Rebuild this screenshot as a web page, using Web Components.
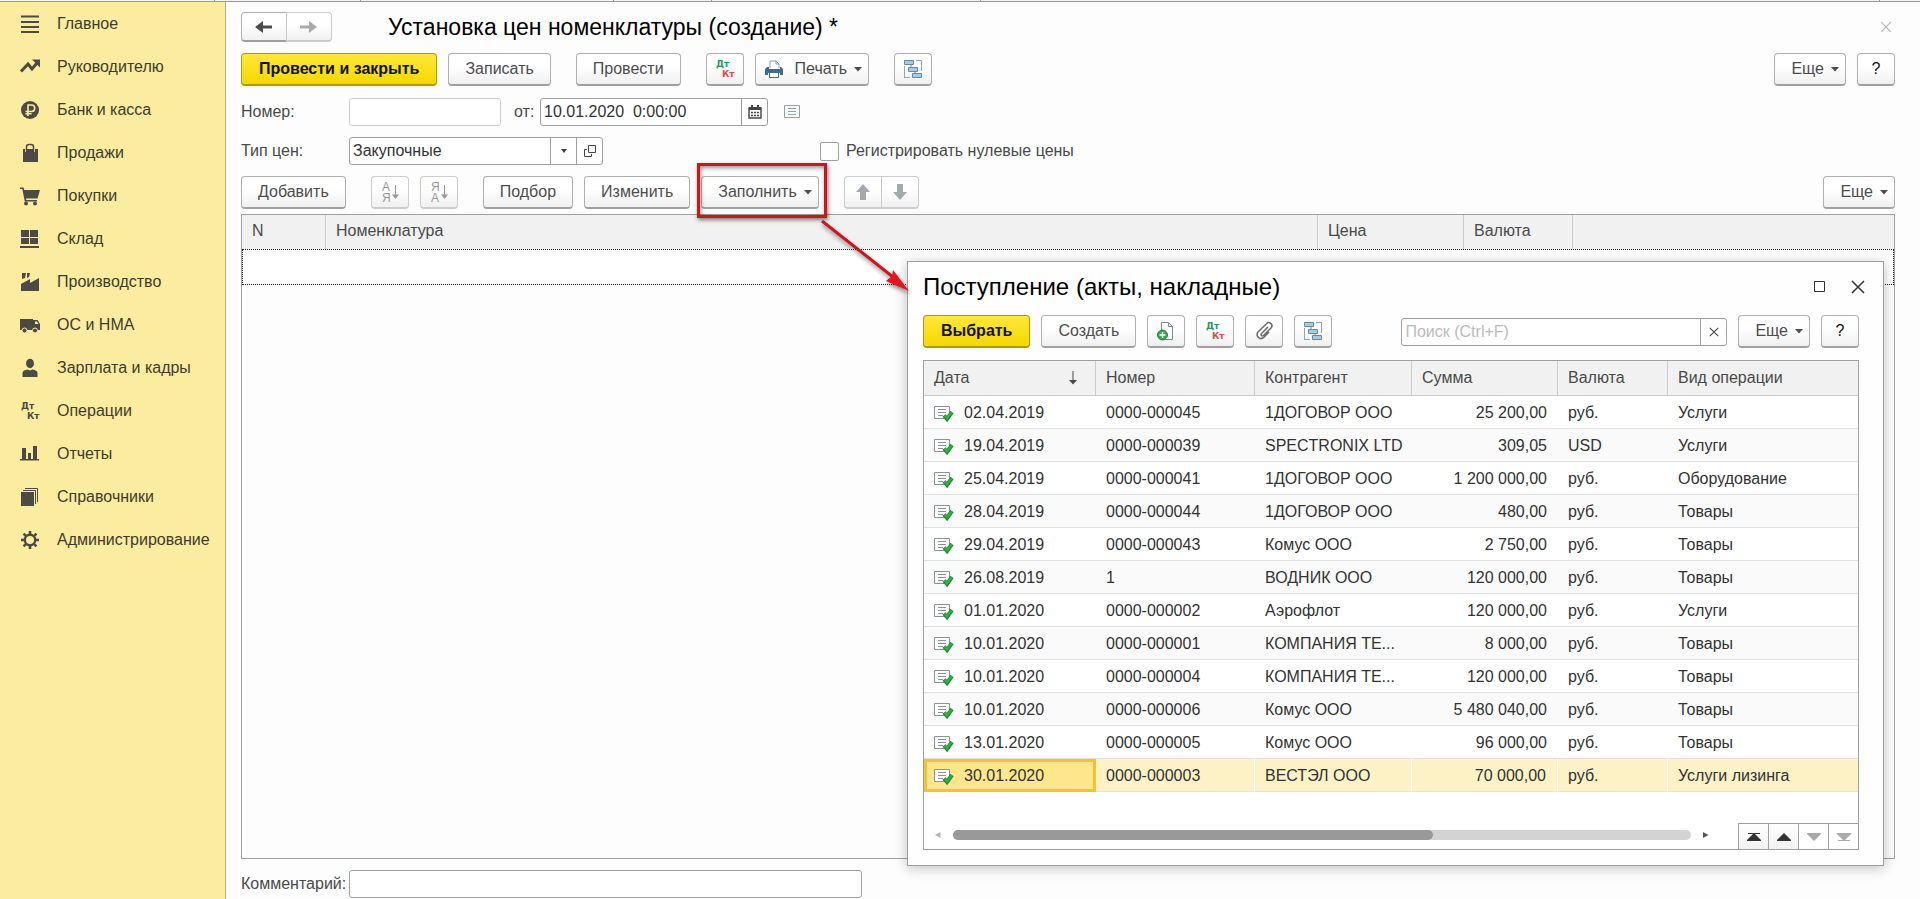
<!DOCTYPE html>
<html lang="ru">
<head>
<meta charset="utf-8">
<title>Установка цен номенклатуры</title>
<style>
	body {
		margin: 0;
		font: 16px/20px "Liberation Sans", Arial, sans-serif;
		color: #4a4a4a;
		background: #fdfdfd;
	}
</style>
</head>
<body>
<price-app></price-app>

<script>
// Inner markup of every icon, with the size of its view box
const ICONS = {
	menu: [20, 20, '<path d="M1 2.500h18M1 8h18M1 13h18M1 18h18" stroke="currentColor" stroke-width="2"/>'],
	trend: [20, 20, '<path d="M1 14.500 8 7l4 5 5-6" fill="none" stroke="currentColor" stroke-width="3"/><path d="M12 2.500h8v8z" fill="currentColor"/>'],
	ruble: [20, 20, '<circle cx="10" cy="10" r="9" fill="currentColor"/><path d="M8 16V5h3.500a3 3 0 0 1 0 6.500H5.500M5.500 13.800h6" fill="none" stroke="#fbec9f" stroke-width="1.600"/>'],
	bag: [20, 20, '<path d="M3 6h2v3h2V6h6v3h2V6h3v13H3z" fill="currentColor"/><path d="M6.500 9V4a2.500 2.500 0 0 1 2.500-2.500h2A2.500 2.500 0 0 1 13.500 4v5" fill="none" stroke="currentColor" stroke-width="1.500"/>'],
	cart: [20, 20, '<path d="M0 1.500h3.500l.8 2.500H20l-2.500 8.500H6l.3 1.500H17v1.500H4.800L2.300 3H0z" fill="currentColor"/><circle cx="6" cy="17.500" r="2" fill="currentColor"/><circle cx="15" cy="17.500" r="2" fill="currentColor"/>'],
	store: [20, 20, '<path d="M1 1h8v7H1zM10 1h8v7h-8zM1 9h8v6H1zM10 9h8v6h-8zM0 17h19v2H0z" fill="currentColor"/>'],
	factory: [20, 20, '<path d="m2 1h4l-1 5-3 1zM7 1h3l-1 4-2 1zM1 12l9-5v4l9-5v13H1z" fill="currentColor"/>'],
	truck: [20, 20, '<path d="M0 4h13v11H0zM13 5h4.500L20 9v6h-7z" fill="currentColor"/><path d="M15 6.500h2l1.500 2.500H15z" fill="#fbec9f"/><g fill="currentColor" stroke="#fbec9f"><circle cx="4.500" cy="15.500" r="2.500"/><circle cx="15" cy="15.500" r="2.500"/></g>'],
	person: [20, 20, '<ellipse cx="10" cy="5.500" rx="4" ry="4.700" fill="currentColor"/><path d="M2.500 19v-4c0-2 2-3 5-3.500l2.500 1 2.500-1c3 .5 5 1.500 5 3.500v4z" fill="currentColor"/>'],
	bars: [20, 20, '<path d="M2 4h4v11H2zM8 9h3v6H8zM13 2h4v13h-4zM0 15h19v1.500H0z" fill="currentColor"/>'],
	books: [20, 20, '<path d="M1 5h13v14H1z" fill="currentColor"/><path d="M3 3.500h12.500V17M5 1.500h12.500V15" fill="none" stroke="currentColor"/>'],
	gear: [20, 20, '<circle cx="10" cy="10" r="5.200" fill="none" stroke="currentColor" stroke-width="2.400"/><path d="M10 1v4M10 15v4M1 10h4M15 10h4M3.600 3.600l2.700 2.700M13.700 13.700l2.700 2.700M3.600 16.400l2.700-2.700M13.700 6.300l2.700-2.700" stroke="currentColor" stroke-width="2.600"/>'],
	dtkt: [20, 20, '<g font-family="DejaVu Sans, sans-serif" font-weight="bold" font-size="9"><text x="1" y="8" fill="var(--dt, currentColor)">Дт</text><text x="7" y="18" fill="var(--kt, currentColor)">Кт</text></g>'],
	back: [18, 16, '<path d="M0 8l8-6v4.500h9v3H8V14z" fill="currentColor"/>'],
	forward: [18, 16, '<path d="M17 8 9 2v4.500H0v3h9V14z" fill="currentColor"/>'],
	printer: [20, 20, '<path d="M6 9V2h6l3 3v4" fill="#fff" stroke="#8b9cab"/><path d="M12 2v3h3" fill="none" stroke="#8b9cab"/><path d="M3 8h2v2h11V8h1l2 2v6h-3v-2H4v2H1v-6z" fill="#3f6996"/><path d="M5.500 13.500h9v5h-9z" fill="#fff" stroke="#3f6996"/>'],
	tree: [20, 20, '<path d="M1.500 7v12M1 18.500h6M13 1.500h5.500V12" fill="none" stroke="#8baabe"/><g fill="#a9cbe2" stroke="#5f8cad"><path d="M1.500 1.500h9v4h-9zM5.500 8.500h9v4h-9zM9.500 14.500h9v4h-9z"/></g><path d="M8 5.500v3M12 12.500v2" stroke="#5f8cad"/>'],
	calendar: [14, 14, '<path d="M1 3h12v10H1z" fill="none" stroke="currentColor" stroke-width="1.400"/><path d="M1 2h12v3H1zM3 0h2v3H3zM9 0h2v3H9z" fill="currentColor"/><path d="M3 7.500h2M6 7.500h2M9 7.500h2M3 10.500h2M6 10.500h2M9 10.500h2" stroke="currentColor" stroke-width="1.700"/>'],
	list: [16, 14, '<path d="M.5.5h15v12H.5z" fill="#fff" stroke="#8fa3b8"/><path d="M4 3.500h8M4 6.500h8M4 9.500h8" stroke="#8fa3b8"/>'],
	open: [12, 12, '<path d="M4.500.5h7v7h-7z" fill="none" stroke="currentColor"/><path d="M3 4.500H.5v7h7V9" fill="none" stroke="currentColor"/>'],
	caret: [8, 5, '<path d="M0 0h8L4 4.500z" fill="currentColor"/>'],
	smallCaret: [6, 4, '<path d="M0 0h6L3 4z" fill="currentColor"/>'],
	up: [14, 16, '<path d="M7 0l7 8h-4v8H4V8H0z" fill="#a2aab0"/>'],
	down: [14, 16, '<path d="M7 16l7-8h-4V0H4v8H0z" fill="#a2aab0"/>'],
	sortAsc: [20, 22, '<g font-family="Liberation Sans, Arial, sans-serif" font-size="12" fill="#999"><text x="2" y="10">А</text><text x="2" y="21">Я</text></g><path d="M15.500 4v12" stroke="#999"/><path d="M12 13.500h7l-3.500 4.500z" fill="#999"/>'],
	sortDesc: [20, 22, '<g font-family="Liberation Sans, Arial, sans-serif" font-size="12" fill="#999"><text x="2" y="10">Я</text><text x="2" y="21">А</text></g><path d="M15.500 4v12" stroke="#999"/><path d="M12 13.500h7l-3.500 4.500z" fill="#999"/>'],
	close: [14, 14, '<path d="M1 1l12 12M13 1 1 13" stroke="currentColor" stroke-width="1.500"/>'],
	square: [12, 12, '<path d="M.5.5h10v10H.5z" fill="none" stroke="currentColor"/>'],
	addFile: [20, 20, '<path d="M5.500 1.500h7l4 4v13h-11z" fill="#fff" stroke="#7f8b99"/><path d="M12.500 1.500v4h4" fill="none" stroke="#7f8b99"/><circle cx="6.500" cy="14" r="5" fill="#37a64f" stroke="#218838"/><path d="M6.500 11v6M3.500 14h6" stroke="#fff" stroke-width="1.500"/>'],
	clip: [20, 20, '<path d="m14 6-6.500 6.500a1.300 1.300 0 0 0 2 2L17 7a3 3 0 0 0-4.500-4.300L4 11a4 4 0 0 0 5.500 5.700L15 11" fill="none" stroke="#6b6b6b" stroke-width="1.500"/>'],
	sort: [8, 14, '<path d="M4 0v11" stroke="currentColor"/><path d="M0 9h8l-4 4.500z" fill="currentColor"/>'],
	posted: [20, 16, '<path d="M.5 1.500h15v12H.5z" fill="#fff" stroke="#8b929b"/><path d="M4 4.500h8M4 7.500h8M4 10.500h5" stroke="#8b929b"/><path d="m10 10.500 3 3.500 5-7" fill="none" stroke="#1e8e2e" stroke-width="4"/><path d="m10.500 10.500 2.500 2.800 4.500-6" fill="none" stroke="#2fb344" stroke-width="2"/>'],
	left: [6, 6, '<path d="M5.500 0v6L0 3z" fill="#b5b5b5"/>'],
	right: [6, 6, '<path d="M0 0v6l5.500-3z" fill="#555"/>'],
	first: [14, 8, '<path d="M1 0h12v1H1zM7 0l7 7v1H0V7z" fill="#333"/>'],
	prev: [14, 8, '<path d="M7 0l7 7v1H0V7z" fill="#333"/>'],
	next: [14, 8, '<path d="M0 0h14v1L7 8 0 1z" fill="#aaa"/>'],
	last: [14, 8, '<path d="M0 0h14v1L7 8 0 1zM1 7h12v1H1z" fill="#aaa"/>']
};

// Attaches an open shadow root and fills it
function render(el, css, html) {
	el.attachShadow({ mode: 'open' }).innerHTML = `<style>* { box-sizing: border-box; } ${css}</style>${html}`;
}

function icon(name) {
	return name ? `<ui-icon name="${name}"></ui-icon>` : '';
}

class UiIcon extends HTMLElement {
	connectedCallback() {
		if (this.shadowRoot) return;
		const [w, h, shape] = ICONS[this.getAttribute('name')];
		render(this, `
			:host { display: inline-flex; flex: none; }
			svg { display: block; overflow: visible; }
		`, `<svg width="${w}" height="${h}" viewBox="0 0 ${w} ${h}" aria-hidden="true">${shape}</svg>`);
	}
}

class UiButton extends HTMLElement {
	connectedCallback() {
		if (this.shadowRoot) return;
		const disabled = this.hasAttribute('disabled') ? 'disabled' : '';
		const label = this.getAttribute('label');
		render(this, `
			:host { display: block; flex: none; }
			button {
				display: flex;
				align-items: center;
				justify-content: center;
				gap: 7px;
				width: 100%;
				height: var(--button-height, 33px);
				padding: 0 16px;
				border: 1px solid #b0b0b0;
				border-bottom: 2px solid #a0a0a0;
				border-radius: var(--button-radius, 4px);
				background: linear-gradient(#fff 40%, #f0f0f0);
				color: #4d4d4d;
				font: inherit;
				white-space: nowrap;
			}
			button:disabled { border-color: #ccc; }
			:host([primary]) button {
				padding: 0 17px;
				border-color: #b39b00;
				background: linear-gradient(#ffe838, #f5d800);
				color: #111;
				font-weight: bold;
			}
			:host([menu]) button { padding-right: 6px; }
			:host([icon]) button { padding-left: 8px; }
			:host([square]) button { width: 38px; padding: 0; color: #111; }
			:host([nav]) button { width: 46px; padding: 0; }
			:host([nav][disabled]) button { color: #aaa; }
			ui-icon[name="printer"] { margin-right: 4px; }
		`, `<button type="button" ${disabled} ${label ? `aria-label="${label}"` : ''}>
				${icon(this.getAttribute('icon'))}<slot></slot>${this.hasAttribute('menu') ? icon('caret') : ''}
			</button>`);
	}
}

// Two buttons glued together
class ButtonPair extends HTMLElement {
	connectedCallback() {
		if (this.shadowRoot) return;
		render(this, `
			:host { display: flex; flex: none; }
			::slotted(:first-child) { --button-radius: 4px 0 0 4px; }
			::slotted(:last-child) { --button-radius: 0 4px 4px 0; margin-left: -1px; }
		`, '<slot></slot>');
	}
}

// Label, text box and the small buttons at its right end
class UiField extends HTMLElement {
	connectedCallback() {
		if (this.shadowRoot) return;
		const attr = name => this.getAttribute(name) || '';
		const buttons = attr('buttons').split(' ').filter(Boolean)
			.map(name => `<button type="button" aria-label="${name}">${icon(name)}</button>`).join('');
		render(this, `
			:host { display: flex; align-items: center; flex: none; }
			label { width: var(--label-width, auto); flex: none; }
			.box {
				display: flex;
				flex: 1;
				height: 28px;
				border: 1px solid #a0a0a0;
				border-radius: 3px;
				background: #fff;
				overflow: hidden;
			}
			:host([muted]) .box { border-color: #ccc; }
			input {
				flex: 1;
				min-width: 0;
				padding: 0 3px;
				border: 0;
				outline: 0;
				background: none;
				color: #333;
				font: inherit;
			}
			input::placeholder { color: #bbb; opacity: 1; }
			button {
				display: flex;
				align-items: center;
				justify-content: center;
				width: 26px;
				padding: 0;
				border: 0;
				border-left: 1px solid #a0a0a0;
				background: none;
				color: #444;
			}
			ui-icon[name="close"] { transform: scale(.7); }
		`, `${attr('label') ? `<label for="box">${attr('label')}</label>` : ''}
			<div class="box"><input id="box" value="${attr('value')}" placeholder="${attr('placeholder')}" ${attr('label') ? '' : 'aria-label="Поиск"'}>${buttons}</div>`);
	}
}

class UiCheckbox extends HTMLElement {
	connectedCallback() {
		if (this.shadowRoot) return;
		render(this, `
			:host { display: block; }
			label { display: flex; align-items: center; gap: 7px; }
			input {
				appearance: none;
				width: 19px;
				height: 19px;
				margin: 0;
				border: 1px solid #a0a0a0;
				border-radius: 2px;
				background: #fff;
			}
		`, '<label><input type="checkbox"><slot></slot></label>');
	}
}

class SideNav extends HTMLElement {
	connectedCallback() {
		if (this.shadowRoot) return;
		const items = [
			['menu', 'Главное'],
			['trend', 'Руководителю'],
			['ruble', 'Банк и касса'],
			['bag', 'Продажи'],
			['cart', 'Покупки'],
			['store', 'Склад'],
			['factory', 'Производство'],
			['truck', 'ОС и НМА'],
			['person', 'Зарплата и кадры'],
			['dtkt', 'Операции'],
			['bars', 'Отчеты'],
			['books', 'Справочники'],
			['gear', 'Администрирование']
		];
		render(this, `
			:host {
				display: block;
				flex: none;
				width: 226px;
				border-right: 1px solid #b5b09a;
				background: #fbec9f;
			}
			a {
				display: flex;
				align-items: center;
				gap: 17px;
				height: 43px;
				padding-left: 20px;
				color: #3f3c2c;
				text-decoration: none;
			}
			ui-icon { color: #4c4a45; }
		`, `<nav>${items.map(([name, text]) => `<a href="#">${icon(name)}${text}</a>`).join('')}</nav>`);
	}
}

// Strip of the cut-off tabs above the form
class TabStrip extends HTMLElement {
	connectedCallback() {
		if (this.shadowRoot) return;
		render(this, `
			:host {
				display: grid;
				grid-template-columns: 215px 146px 253px 98px 269px 1fr 40px;
				height: 2px;
				border-bottom: 1px solid #999;
				background: #f4f4f4;
			}
			i { border-right: 1px solid #999; }
		`, '<i></i><i></i><i></i><i></i><i></i><i></i>');
	}
}

class PriceTable extends HTMLElement {
	connectedCallback() {
		if (this.shadowRoot) return;
		render(this, `
			:host {
				display: block;
				flex: 1;
				border: 1px solid #a0a0a0;
			}
			table { width: 100%; border-collapse: separate; border-spacing: 0; table-layout: fixed; }
			th {
				height: 34px;
				padding: 0 0 8px 10px;
				border-right: 1px solid #ccc;
				background: #f1f1f1;
				font-weight: normal;
				text-align: left;
				vertical-align: bottom;
			}
			th:last-child { border-right: 0; }
			td {
				height: 36px;
				padding: 0;
				border: 1px dotted #222;
				background: #fff;
			}
			.n { width: 84px; }
			.price { width: 146px; }
			.currency { width: 109px; }
			.rest { width: 321px; }
		`, `<table>
				<tr><th class="n">N</th><th>Номенклатура</th><th class="price">Цена</th><th class="currency">Валюта</th><th class="rest"></th></tr>
				<tr><td colspan="5"></td></tr>
			</table>`);
	}
}

class ReceiptTable extends HTMLElement {
	connectedCallback() {
		if (this.shadowRoot) return;
		const rows = [
			['02.04.2019', '0000-000045', '1ДОГОВОР ООО', '25 200,00', 'руб.', 'Услуги'],
			['19.04.2019', '0000-000039', 'SPECTRONIX LTD', '309,05', 'USD', 'Услуги'],
			['25.04.2019', '0000-000041', '1ДОГОВОР ООО', '1 200 000,00', 'руб.', 'Оборудование'],
			['28.04.2019', '0000-000044', '1ДОГОВОР ООО', '480,00', 'руб.', 'Товары'],
			['29.04.2019', '0000-000043', 'Комус ООО', '2 750,00', 'руб.', 'Товары'],
			['26.08.2019', '1', 'ВОДНИК ООО', '120 000,00', 'руб.', 'Товары'],
			['01.01.2020', '0000-000002', 'Аэрофлот', '120 000,00', 'руб.', 'Услуги'],
			['10.01.2020', '0000-000001', 'КОМПАНИЯ ТЕ...', '8 000,00', 'руб.', 'Товары'],
			['10.01.2020', '0000-000004', 'КОМПАНИЯ ТЕ...', '120 000,00', 'руб.', 'Товары'],
			['10.01.2020', '0000-000006', 'Комус ООО', '5 480 040,00', 'руб.', 'Товары'],
			['13.01.2020', '0000-000005', 'Комус ООО', '96 000,00', 'руб.', 'Товары'],
			['30.01.2020', '0000-000003', 'ВЕСТЭЛ ООО', '70 000,00', 'руб.', 'Услуги лизинга']
		];
		render(this, `
			:host { display: block; border: 1px solid #a0a0a0; background: #fff; }
			table { width: 100%; border-collapse: separate; border-spacing: 0; table-layout: fixed; }
			th, td { padding: 0 11px 0 10px; text-align: left; white-space: nowrap; }
			th {
				height: 35px;
				padding-right: 0;
				border-right: 1px solid #ccc;
				border-bottom: 1px solid #ccc;
				background: #f1f1f1;
				font-weight: normal;
			}
			th:last-child { border-right: 0; }
			th div, td div { display: flex; align-items: center; }
			th div { justify-content: space-between; padding-right: 18px; }
			td div { gap: 10px; }
			td { height: 33px; padding-top: 1px; border-bottom: 1px solid #e2e2e2; color: #333; }
			tr:nth-child(even) td { background: #fafafa; }
			td:nth-child(4) { text-align: right; }
			tr.current td { border-right: 1px solid #fff; background: #fdf1c6; }
			tr.current td:last-child { border-right: 0; }
			tr.current td:first-child { border: 3px solid #f0c330; padding-left: 7px; background: #fde68c; }
			.foot { display: flex; align-items: flex-end; height: 57px; }
			.scroll { display: flex; align-items: center; gap: 12px; flex: 1; height: 26px; padding: 0 29px 0 11px; margin-bottom: 1px; }
			.track { flex: 1; height: 10px; border-radius: 5px; background: #d3d3d3; }
			.thumb { width: 65%; height: 10px; border-radius: 5px; background: #999; }
			.pager { display: flex; border-top: 1px solid #a0a0a0; }
			.pager button {
				display: flex;
				align-items: center;
				justify-content: center;
				width: 30px;
				height: 25px;
				padding: 0;
				border: 0;
				border-left: 1px solid #a0a0a0;
				background: linear-gradient(#fff, #f2f2f2);
			}
			.pager button:disabled { background: #fff; }
		`, `<table>
				<thead>
					<tr>
						<th style="width: 172px"><div>Дата ${icon('sort')}</div></th>
						<th style="width: 159px">Номер</th>
						<th style="width: 157px">Контрагент</th>
						<th style="width: 146px">Сумма</th>
						<th style="width: 110px">Валюта</th>
						<th>Вид операции</th>
					</tr>
				</thead>
				<tbody>
					${rows.map((row, i) => `<tr class="${i === rows.length - 1 ? 'current' : ''}">${row.map((cell, j) =>
						`<td>${j === 0 ? `<div>${icon('posted')}${cell}</div>` : cell}</td>`).join('')}</tr>`).join('')}
				</tbody>
			</table>
			<div class="foot">
				<div class="scroll">${icon('left')}<div class="track"><div class="thumb"></div></div>${icon('right')}</div>
				<div class="pager">
					<button type="button" aria-label="В начало">${icon('first')}</button>
					<button type="button" aria-label="Назад">${icon('prev')}</button>
					<button type="button" aria-label="Вперед" disabled>${icon('next')}</button>
					<button type="button" aria-label="В конец" disabled>${icon('last')}</button>
				</div>
			</div>`);
	}
}

// Floating window with the list of receipts
class ReceiptWindow extends HTMLElement {
	connectedCallback() {
		if (this.shadowRoot) return;
		render(this, `
			:host {
				display: block;
				padding: 11px 24px 15px 15px;
				border: 1px solid #a0a0a0;
				background: #fefefe;
				box-shadow: 0 2px 12px rgba(0, 0, 0, .25);
			}
			header { display: flex; align-items: center; gap: 25px; height: 28px; margin-right: -6px; color: #333; }
			h2 { flex: 1; margin: 0; color: #000; font: 24px/28px "Liberation Sans", Arial, sans-serif; }
			.bar { display: flex; align-items: center; gap: 11px; margin: 14px 0 12px; }
			ui-field { width: 326px; margin-left: auto; }
			ui-button { --dt: #1f9a5c; --kt: #e04848; }
		`, `<header><h2>Поступление (акты, накладные)</h2>${icon('square')}${icon('close')}</header>
			<div class="bar">
				<ui-button primary>Выбрать</ui-button>
				<ui-button>Создать</ui-button>
				<ui-button square icon="addFile" label="Создать копированием"></ui-button>
				<ui-button square icon="dtkt" label="Проводки"></ui-button>
				<ui-button square icon="clip" label="Файлы"></ui-button>
				<ui-button square icon="tree" label="Структура подчиненности"></ui-button>
				<ui-field placeholder="Поиск (Ctrl+F)" buttons="close"></ui-field>
				<ui-button menu>Еще</ui-button>
				<ui-button square>?</ui-button>
			</div>
			<receipt-table></receipt-table>`);
	}
}

class PriceForm extends HTMLElement {
	connectedCallback() {
		if (this.shadowRoot) return;
		render(this, `
			:host {
				display: flex;
				flex-direction: column;
				flex: 1;
				min-width: 0;
				padding: 10px 25px 1px 15px;
			}
			header { display: flex; align-items: center; height: 30px; }
			header ui-button { --button-height: 30px; }
			h1 { flex: 1; margin: 0 0 0 56px; color: #000; font: 23px/28px "Liberation Sans", Arial, sans-serif; }
			header > ui-icon { color: #b5b5b5; transform: scale(.8); margin-right: 2px; }
			.bar { display: flex; gap: 11px; margin: 11px 0 12px; }
			.gap { margin-left: 14px; }
			.end { margin-left: auto; }
			.row { display: flex; align-items: center; margin-bottom: 11px; }
			.row > ui-field, .comment { --label-width: 108px; }
			.number { width: 260px; }
			.row > .date { --label-width: 26px; width: 254px; margin: 0 16px 0 13px; }
			.type { width: 362px; }
			ui-checkbox { margin-left: 217px; }
			.table-bar { margin: 0 0 5px; }
			.comment { width: 621px; margin-top: 11px; }
			ui-button { --dt: #1f9a5c; --kt: #e04848; }
			.marked { position: relative; }
			.marked::after {
				content: "";
				position: absolute;
				inset: -13px -8px -9px -4px;
				border: 3px solid #d0141a;
				box-shadow: 1px 2px 4px rgba(0, 0, 0, .5), inset 1px 2px 4px rgba(0, 0, 0, .4);
			}
		`, `<header>
				<button-pair>
					<ui-button nav icon="back" label="Назад"></ui-button>
					<ui-button nav disabled icon="forward" label="Вперед"></ui-button>
				</button-pair>
				<h1>Установка цен номенклатуры (создание) *</h1>
				${icon('close')}
			</header>
			<div class="bar">
				<ui-button primary>Провести и закрыть</ui-button>
				<ui-button>Записать</ui-button>
				<ui-button class="gap">Провести</ui-button>
				<ui-button class="gap" square icon="dtkt" label="Проводки"></ui-button>
				<ui-button icon="printer" menu>Печать</ui-button>
				<ui-button class="gap" square icon="tree" label="Структура подчиненности"></ui-button>
				<ui-button class="end" menu>Еще</ui-button>
				<ui-button square>?</ui-button>
			</div>
			<div class="row">
				<ui-field class="number" label="Номер:" muted></ui-field>
				<ui-field class="date" label="от:" value="10.01.2020&nbsp; 0:00:00" buttons="calendar"></ui-field>
				${icon('list')}
			</div>
			<div class="row">
				<ui-field class="type" label="Тип цен:" value="Закупочные" buttons="smallCaret open"></ui-field>
				<ui-checkbox>Регистрировать нулевые цены</ui-checkbox>
			</div>
			<div class="bar table-bar">
				<ui-button>Добавить</ui-button>
				<ui-button class="gap" square disabled icon="sortAsc" label="По возрастанию"></ui-button>
				<ui-button square disabled icon="sortDesc" label="По убыванию"></ui-button>
				<ui-button class="gap">Подбор</ui-button>
				<ui-button>Изменить</ui-button>
				<ui-button class="marked" menu>Заполнить</ui-button>
				<button-pair class="gap">
					<ui-button square disabled icon="up" label="Вверх"></ui-button>
					<ui-button square disabled icon="down" label="Вниз"></ui-button>
				</button-pair>
				<ui-button class="end" menu>Еще</ui-button>
			</div>
			<price-table></price-table>
			<ui-field class="comment" label="Комментарий:"></ui-field>`);
	}
}

class PriceApp extends HTMLElement {
	connectedCallback() {
		if (this.shadowRoot) return;
		render(this, `
			:host { display: flex; flex-direction: column; position: relative; min-height: 100vh; }
			.body { display: flex; flex: 1; }
			receipt-window { position: absolute; top: 261px; left: 907px; right: 36px; }
			.arrow {
				position: absolute;
				top: 218px;
				left: 820px;
				filter: drop-shadow(1px 3px 2px rgba(0, 0, 0, .45));
			}
		`, `<tab-strip></tab-strip>
			<div class="body"><side-nav></side-nav><price-form></price-form></div>
			<receipt-window></receipt-window>
			<svg class="arrow" width="92" height="76" viewBox="0 0 92 76" aria-hidden="true">
				<path d="M2 3l71 56" stroke="#d0141a" stroke-width="3"/>
				<path d="M89 73 73 52l-1 6-6 5z" fill="#e8141a"/>
			</svg>`);
	}
}

customElements.define('ui-icon', UiIcon);
customElements.define('ui-button', UiButton);
customElements.define('button-pair', ButtonPair);
customElements.define('ui-field', UiField);
customElements.define('ui-checkbox', UiCheckbox);
customElements.define('side-nav', SideNav);
customElements.define('tab-strip', TabStrip);
customElements.define('price-table', PriceTable);
customElements.define('receipt-table', ReceiptTable);
customElements.define('receipt-window', ReceiptWindow);
customElements.define('price-form', PriceForm);
customElements.define('price-app', PriceApp);
</script>
</body>
</html>
